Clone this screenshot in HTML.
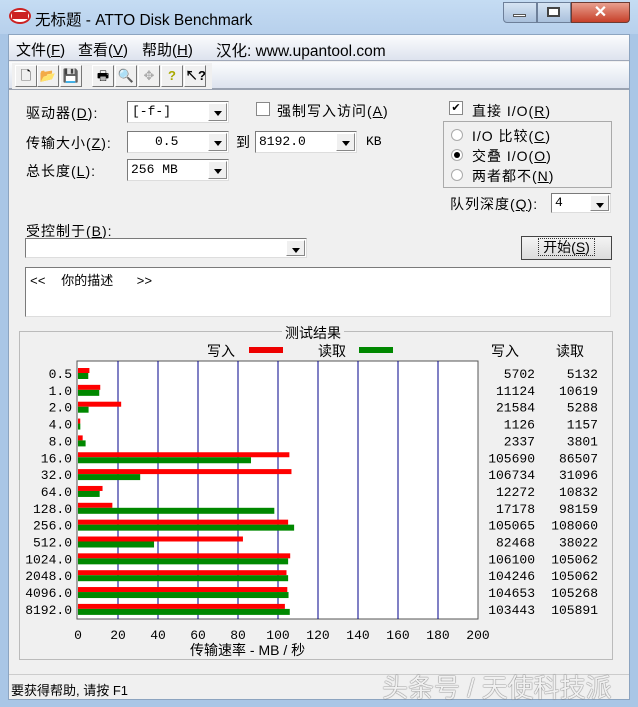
<!DOCTYPE html>
<html><head><meta charset="utf-8"><style>
*{margin:0;padding:0;box-sizing:border-box}
body{width:638px;height:707px;overflow:hidden;background:#a9c6e6;font-family:"Liberation Sans","Noto Sans CJK SC",sans-serif;font-size:13px;color:#000;position:relative}
.a{position:absolute}
.m{font-family:"Liberation Mono","Noto Sans CJK SC",monospace;font-size:13px}
.l{font-size:14px;letter-spacing:1px}
.cb{background:#fff;border:1px solid #7a7a7a;border-right-color:#ddd;border-bottom-color:#ddd}
.dd{position:absolute;right:1px;top:1px;bottom:1px;width:19px;background:#f0f0f0;border:1px solid #fff;border-right-color:#888;border-bottom-color:#888}
.dd:after{content:"";position:absolute;left:5px;top:7px;border:4px solid transparent;border-top:5px solid #000}
.rd{width:12px;height:12px;border-radius:50%;border:1px solid #aaa;background:#fff}
.tb{position:absolute;top:65px;width:22px;height:22px;border:1px solid #fff;border-right-color:#777;border-bottom-color:#777;background:#f0f0f0;text-align:center;line-height:20px;font-size:13px}
</style></head><body>
<div class="a" style="left:0;top:0;width:638px;height:34px;background:linear-gradient(#c5dcf3,#b7d0ec)"></div>
<div class="a" style="left:9px;top:8px;width:22px;height:16px;border-radius:50%;border:2px solid #c22;background:#fff"></div>
<div class="a" style="left:12px;top:12px;width:16px;height:7px;background:#c22"></div>
<div class="a" style="left:35px;top:8px;font-size:15.5px">无标题 - ATTO Disk Benchmark</div>
<div class="a" style="left:503px;top:2px;width:34px;height:21px;background:linear-gradient(#d6e4f3,#a9c0dc);border:1px solid #6d7f99;border-radius:0 0 0 4px"></div>
<div class="a" style="left:513px;top:14px;width:13px;height:3px;background:#fff;border:1px solid #555"></div>
<div class="a" style="left:537px;top:2px;width:34px;height:21px;background:linear-gradient(#d6e4f3,#a9c0dc);border:1px solid #6d7f99"></div>
<div class="a" style="left:547px;top:7px;width:13px;height:10px;border:2px solid #444;background:#fff"></div>
<div class="a" style="left:571px;top:2px;width:59px;height:21px;background:linear-gradient(#e8a08f,#c7402a);border:1px solid #6d3b33;border-radius:0 0 4px 0;color:#fff;font-weight:bold;font-size:16px;text-align:center;line-height:19px">✕</div>
<div class="a" style="left:8px;top:34px;width:622px;height:666px;background:#f0f0f0;border:1px solid #8ca4c0"></div>
<div class="a" style="left:9px;top:35px;width:620px;height:26px;background:linear-gradient(#fbfcfd,#dde3ee);border-bottom:1px solid #a0a8b8"></div>
<div class="a" style="left:16px;top:39px;font-size:15px">文件(<u>F</u>)</div>
<div class="a" style="left:78px;top:39px;font-size:15px">查看(<u>V</u>)</div>
<div class="a" style="left:142px;top:39px;font-size:15px">帮助(<u>H</u>)</div>
<div class="a" style="left:216px;top:39px;font-size:15.5px">汉化: www.upantool.com</div>
<div class="a" style="left:9px;top:62px;width:620px;height:28px;background:linear-gradient(#fbfcfd,#dde3ee);border-bottom:2px solid #9aa2b0"></div>
<div class="a" style="left:12px;top:63px;width:200px;height:26px;background:#f0f0f0"></div>
<div class="tb" style="left:15px">🗋</div><div class="tb" style="left:37px">📂</div><div class="tb" style="left:60px">💾</div>
<div class="tb" style="left:92px">🖶</div><div class="tb" style="left:115px">🔍</div><div class="tb" style="left:138px;color:#aaa">✥</div>
<div class="tb" style="left:161px;color:#aa0;font-weight:bold">?</div><div class="tb" style="left:184px;font-weight:bold">↖?</div>
<div class="a l" style="left:26px;top:103px">驱动器(<u>D</u>):</div>
<div class="a cb m" style="left:127px;top:101px;width:102px;height:22px;padding:2px 4px">[-f-]<div class="dd"></div></div>
<div class="a" style="left:256px;top:102px;width:14px;height:14px;background:#fff;border:1px solid #888"></div>
<div class="a l" style="left:277px;top:101px">强制写入访问(<u>A</u>)</div>
<div class="a l" style="left:26px;top:133px">传输大小(<u>Z</u>):</div>
<div class="a cb m" style="left:127px;top:131px;width:102px;height:22px;padding:2px 0 0 27px">0.5<div class="dd"></div></div>
<div class="a" style="left:236px;top:132px;font-size:14px">到</div>
<div class="a cb m" style="left:255px;top:131px;width:102px;height:22px;padding:2px 3px">8192.0<div class="dd"></div></div>
<div class="a m" style="left:366px;top:134px">KB</div>
<div class="a l" style="left:26px;top:161px">总长度(<u>L</u>):</div>
<div class="a cb m" style="left:127px;top:159px;width:102px;height:22px;padding:2px 3px">256 MB<div class="dd"></div></div>
<div class="a" style="left:449px;top:101px;width:14px;height:14px;background:#fff;border:1px solid #888;font-size:11px;line-height:12px;text-align:center">✔</div>
<div class="a l" style="left:472px;top:101px">直接 I/O(<u>R</u>)</div>
<div class="a" style="left:443px;top:121px;width:169px;height:67px;border:1px solid #aaa"></div>
<div class="a rd" style="left:451px;top:129px"></div>
<div class="a rd" style="left:451px;top:149px"><div style="width:6px;height:6px;background:#000;border-radius:50%;margin:2px"></div></div>
<div class="a rd" style="left:451px;top:169px"></div>
<div class="a l" style="left:472px;top:126px">I/O 比较(<u>C</u>)</div>
<div class="a l" style="left:472px;top:146px">交叠 I/O(<u>O</u>)</div>
<div class="a l" style="left:472px;top:166px">两者都不(<u>N</u>)</div>
<div class="a l" style="left:450px;top:194px">队列深度(<u>Q</u>):</div>
<div class="a cb m" style="left:551px;top:193px;width:60px;height:20px;padding:1px 3px">4<div class="dd"></div></div>
<div class="a l" style="left:26px;top:221px">受控制于(<u>B</u>):</div>
<div class="a cb" style="left:25px;top:238px;width:282px;height:20px"><div class="dd"></div></div>
<div class="a" style="left:521px;top:236px;width:91px;height:24px;border:1px solid #444;background:linear-gradient(#f4f4f4,#dcdcdc);text-align:center;font-size:14px;line-height:21px"><span style="outline:1px dotted #333;padding:0 4px">开始(<u>S</u>)</span></div>
<div class="a cb m" style="left:25px;top:267px;width:586px;height:50px;padding:2px 4px;white-space:pre">&lt;&lt;  你的描述   &gt;&gt;</div>
<div class="a" style="left:19px;top:331px;width:594px;height:329px;border:1px solid #bbb"></div>
<div class="a" style="left:282px;top:323px;background:#f0f0f0;padding:0 3px;font-size:14px">测试结果</div>
<div class="a" style="left:207px;top:341px;font-size:14px">写入</div>
<div class="a" style="left:249px;top:347px;width:34px;height:6px;background:#e00"></div>
<div class="a" style="left:318px;top:341px;font-size:14px">读取</div>
<div class="a" style="left:359px;top:347px;width:34px;height:6px;background:#080"></div>
<div class="a" style="left:491px;top:341px;font-size:14px">写入</div>
<div class="a" style="left:556px;top:341px;font-size:14px">读取</div>
<svg class="a" style="left:0;top:0" width="638" height="707">
<rect x="77" y="361" width="401" height="258" fill="#fff" stroke="#555"/>
<g stroke="#00008b">
<line x1="118" y1="361" x2="118" y2="619"/><line x1="158" y1="361" x2="158" y2="619"/><line x1="198" y1="361" x2="198" y2="619"/><line x1="238" y1="361" x2="238" y2="619"/><line x1="278" y1="361" x2="278" y2="619"/><line x1="318" y1="361" x2="318" y2="619"/><line x1="358" y1="361" x2="358" y2="619"/><line x1="398" y1="361" x2="398" y2="619"/><line x1="438" y1="361" x2="438" y2="619"/>
</g>
<g id="bars"></g>
<g font-family="Liberation Mono, monospace" font-size="13" id="txt"></g>
</svg>
<div class="a" style="left:190px;top:640px;font-size:14px">传输速率 - MB / 秒</div>
<div class="a" style="left:9px;top:674px;width:620px;height:26px;border-top:1px solid #ccc"></div>
<div class="a" style="left:11px;top:680px;font-size:13px">要获得帮助, 请按 F1</div>
<div class="a" style="left:382px;top:668px;font-size:26px;color:rgba(255,255,255,0.9);text-shadow:0 0 1px #666,0 0 1px #666">头条号 / 天使科技派</div>
<script>
var labels=["0.5","1.0","2.0","4.0","8.0","16.0","32.0","64.0","128.0","256.0","512.0","1024.0","2048.0","4096.0","8192.0"];
var w=[5702,11124,21584,1126,2337,105690,106734,12272,17178,105065,82468,106100,104246,104653,103443];
var r=[5132,10619,5288,1157,3801,86507,31096,10832,98159,108060,38022,105062,105062,105268,105891];
var b="",t="";
for(var i=0;i<15;i++){var cy=373+i*16.85;
b+='<rect x="78" y="'+(cy-5)+'" width="'+(w[i]/500)+'" height="5" fill="#f00"/><rect x="78" y="'+cy+'" width="'+(r[i]/500)+'" height="6" fill="#080"/>';
t+='<text x="72" y="'+(cy+5)+'" text-anchor="end">'+labels[i]+'</text><text x="535" y="'+(cy+5)+'" text-anchor="end">'+w[i]+'</text><text x="598" y="'+(cy+5)+'" text-anchor="end">'+r[i]+'</text>';}
for(var k=0;k<=10;k++){t+='<text x="'+(78+k*40)+'" y="639" text-anchor="middle">'+(k*20)+'</text>';}
document.getElementById("bars").innerHTML=b;document.getElementById("txt").innerHTML=t;
</script>
</body></html>
